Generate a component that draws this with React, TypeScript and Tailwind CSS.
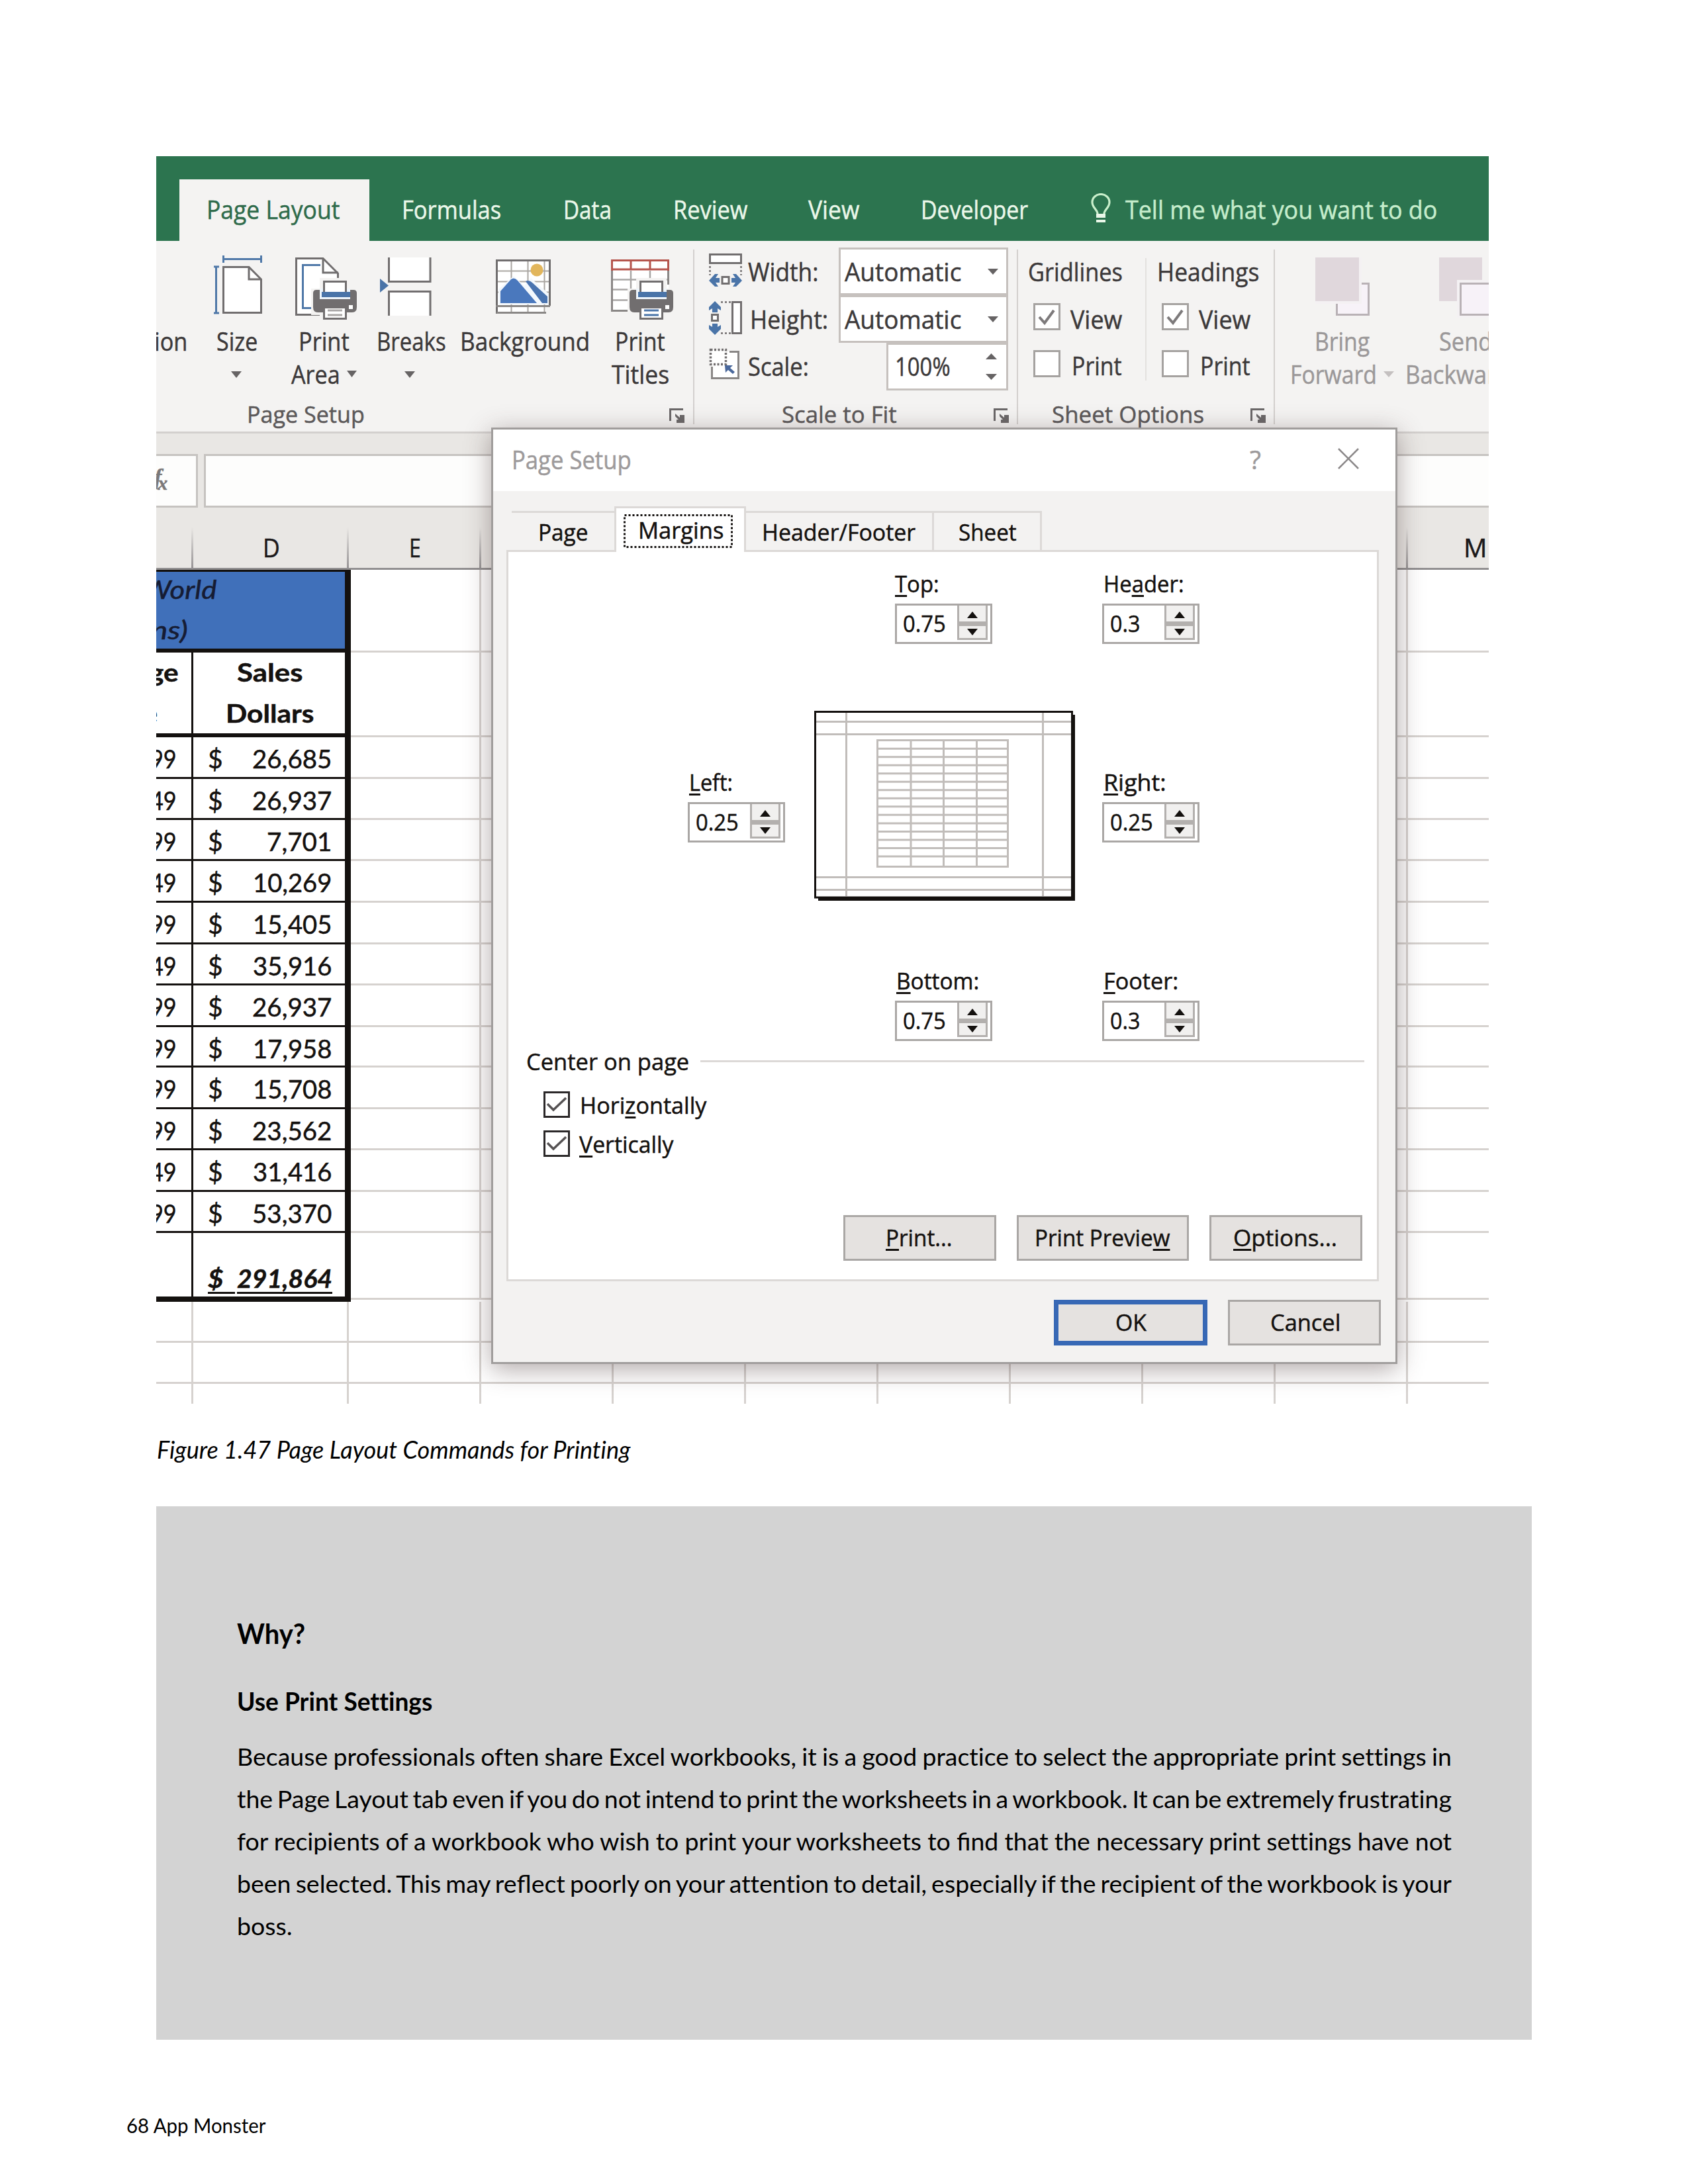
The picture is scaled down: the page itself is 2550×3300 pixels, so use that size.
import { useLayoutEffect, useRef, useState } from "react";
import type { ReactNode } from "react";

/* A run of text stretched so that its ink is exactly w pixels wide. "&" marks a mnemonic letter. */
function T({ t, w, c = "" }: { t: string; w: number; c?: string }) {
  const ref = useRef<HTMLSpanElement>(null);
  const [tr, setTr] = useState("none");
  const i = t.indexOf("&");
  const plain = t.replace("&", "");
  useLayoutEffect(() => {
    const el = ref.current;
    const ctx = document.createElement("canvas").getContext("2d");
    if (!el || !ctx) return;
    ctx.font = getComputedStyle(el).font;
    const m = ctx.measureText(plain);
    const lb = -m.actualBoundingBoxLeft;
    const rb = m.width - m.actualBoundingBoxRight;
    const s = w / (el.offsetWidth - lb - rb);
    setTr(`translateX(${-lb * s}px) scaleX(${s})`);
  }, [plain, w]);
  return (
    <span className={`block shrink-0 ${c}`} style={{ width: w }}>
      <span ref={ref} className="inline-block origin-left whitespace-pre align-top" style={{ transform: tr }}>
        {i < 0 ? (
          plain
        ) : (
          <>
            {plain.slice(0, i)}
            <span className="underline decoration-[3px] underline-offset-[4px] [text-decoration-skip-ink:none]">{plain[i]}</span>
            {plain.slice(i + 1)}
          </>
        )}
      </span>
    </span>
  );
}

/* One justified line: the spaces take up the difference to the measure; fi and fl are joined. */
function Line({ t, w }: { t: string; w: number }) {
  const ref = useRef<HTMLSpanElement>(null);
  const [ws, setWs] = useState(0);
  useLayoutEffect(() => {
    if (ref.current) setWs((w - ref.current.getBoundingClientRect().width) / (t.split(" ").length - 1));
  }, [t, w]);
  return (
    <div className="whitespace-nowrap">
      <span ref={ref} style={{ wordSpacing: ws }}>
        {t.split(/(fi|fl)/).map((part, k) =>
          k % 2 ? (
            <span key={k} className="[font-variant-ligatures:normal]">{part}</span>
          ) : (
            part
          ),
        )}
      </span>
    </div>
  );
}

function Tri({ up = false, w = 16, h = 10, fill = "#666364" }: { up?: boolean; w?: number; h?: number; fill?: string }) {
  return (
    <svg className="shrink-0" width={w} height={h} viewBox="0 0 16 10" preserveAspectRatio="none">
      <path d={up ? "M0 10H16L8 0Z" : "M0 0H16L8 10Z"} fill={fill} />
    </svg>
  );
}

function Art({ x, y = 364, w, h = 126, children }: { x: number; y?: number; w: number; h?: number; children: ReactNode }) {
  return (
    <svg className="block shrink-0" width={w} height={h} viewBox={`${x} ${y} ${w} ${h}`} fill="none">
      {children}
    </svg>
  );
}

function Launcher({ c }: { c: string }) {
  return (
    <svg className={`mt-[11px] shrink-0 ${c}`} width="23" height="22" viewBox="0 0 23 22">
      <path d="M1.5 19V1.5H21" stroke="#6b6869" strokeWidth="3" fill="none" />
      <path d="M9 8L16 14V10H23V22H11V17H14L9 12Z" fill="#6b6869" />
    </svg>
  );
}

function Printer({ dx = 0, ink = "#a9a6a5" }: { dx?: number; ink?: string }) {
  return (
    <g transform={`translate(${dx} 0)`}>
      <path d="M483 420H529V436H544V476H529V487H483V476H470V436H483Z" fill="#f4f3f2" />
      <path d="M473 443Q473 438 478 438H534Q539 438 539 443V464Q539 472 532 472H480Q473 472 473 464Z" fill="#716e6f" />
      <path d="M483 436H529V452H483Z" fill="#eef5fb" />
      <path d="M486 441H529V449H486Z" fill="#4a74a8" />
      <rect x="489.5" y="425.5" width="33" height="18" fill="#fff" stroke="#716e6f" strokeWidth="3" />
      <path d="M488 441H524V449H488Z" fill="#4a74a8" />
      <rect x="527" y="461" width="6" height="6" fill="#fff" />
      <rect x="489.5" y="464.5" width="33" height="17" fill="#fff" stroke="#716e6f" strokeWidth="3" />
      <path d="M495 469H517M495 476H517" stroke={ink} strokeWidth="3" />
    </g>
  );
}

function Check({ on = false }: { on?: boolean }) {
  return (
    <span className="-mt-[7px] block h-[41px] w-[41px] shrink-0 border-[3px] border-[#a5a2a0] bg-white">
      {on && (
        <svg width="35" height="35" viewBox="0 0 35 35" fill="none">
          <path d="M6 18L14 27L28 8" stroke="#7d7a7b" strokeWidth="4" />
        </svg>
      )}
    </span>
  );
}

function DialogCheck() {
  return (
    <span className="block h-[40px] w-[40px] shrink-0 border-[3px] border-[#2b2829] bg-white">
      <svg width="34" height="34" viewBox="0 0 34 34" fill="none">
        <path d="M3 16L12 25L31 7" stroke="#555253" strokeWidth="3.5" />
      </svg>
    </span>
  );
}

const TABS: [string, number, string][] = [
  ["Formulas", 150, "ml-[49px]"],
  ["Data", 73, "ml-[94px]"],
  ["Review", 113, "ml-[93px]"],
  ["View", 78, "ml-[91px]"],
  ["Developer", 163, "ml-[92px]"],
];

function TabBar() {
  return (
    <div className="flex h-[128px] bg-[#2c744f] leading-[50px] text-[#eaf7e9]">
      <div className="mt-[35px] ml-[35px] h-[93px] w-[287px] shrink-0 bg-[#f4f3f2] pt-[20px] pl-[41px] text-[#2f6b4b]">
        <T t="Page Layout" w={202} />
      </div>
      {TABS.map(([t, w, c]) => (
        <T key={t} t={t} w={w} c={`mt-[55px] ${c}`} />
      ))}
      <svg className="mt-[56px] ml-[94px] shrink-0" width="30" height="45" viewBox="0 0 30 45" fill="none">
        <path d="M10 31C10 25 2 22 2 13.500A13 12 0 0 1 28 13.500C28 22 20 25 20 31" stroke="#c9efcb" strokeWidth="3.200" />
        <path d="M8 31H22V37H8ZM8 40H22V44H8Z" fill="#eaf7e9" />
      </svg>
      <T t="Tell me what you want to do" w={472} c="mt-[55px] ml-[22px] text-[#c5eccb]" />
    </div>
  );
}

function Divider() {
  return <div className="mt-[13px] h-[264px] w-[2px] shrink-0 bg-[#d3d0ce]" />;
}

function BigButtons() {
  return (
    <div className="flex h-[242px] leading-[50px]">
      <div className="flex w-[47px] shrink-0 justify-end pt-[126px]">
        <T t="ion" w={50} />
      </div>
      <div className="flex w-[151px] shrink-0 flex-col items-center">
        <Art x={321} w={76}>
          <path d="M337.500 386V397M394.500 386V397M337 391.500H395M323 403H331M323 473H331M326.500 403V473" stroke="#4f78a8" strokeWidth="3" />
          <path d="M337.500 403.500H376L394.500 422V472.500H337.500Z" fill="#fff" stroke="#716e6f" strokeWidth="3" />
          <path d="M376 403V422H395" stroke="#716e6f" strokeWidth="3" />
        </Art>
        <T t="Size" w={63} />
        <div className="-ml-[3px] pt-[21px] leading-none"><Tri /></div>
      </div>
      <div className="flex w-[110px] shrink-0 flex-col items-center">
        <Art x={437} w={104}>
          <path d="M447.500 390.500H488L510.500 413V475.500H447.500Z" fill="#fff" stroke="#716e6f" strokeWidth="3" />
          <path d="M488 390V412H511" stroke="#716e6f" strokeWidth="3" />
          <path d="M484 400.500H457.500V465.500H475" stroke="#4f78a8" strokeWidth="3" />
          <Printer />
        </Art>
        <T t="Print" w={77} />
        <div className="flex items-center gap-[10px]">
          <T t="Area" w={74} />
          <Tri w={15} />
        </div>
      </div>
      <div className="flex w-[155px] shrink-0 flex-col items-center">
        <Art x={574} w={95}>
          <path d="M574 421L587 431.500L574 442Z" fill="#4a74a8" />
          <path d="M586 389H651V427H586ZM586 439H651V477H586Z" fill="#fff" />
          <path d="M587.500 389V425.500H650V389M587.500 477V440.500H650V477" stroke="#716e6f" strokeWidth="3" />
        </Art>
        <T t="Breaks" w={105} />
        <div className="-ml-[5px] pt-[21px] leading-none"><Tri /></div>
      </div>
      <div className="flex w-[188px] shrink-0 flex-col items-center">
        <Art x={749} w={88}>
          <path d="M750.500 393.500H830.500V462H825V472.500H750.500Z" fill="#fff" />
          <path d="M772.500 393V472M797.500 393V472M822.500 393V472M750 409.500H831M750 425.500H831M750 441.500H831" stroke="#aaa6a2" strokeWidth="2" />
          <path d="M750.500 474V393.500H830.500V462" stroke="#716e6f" strokeWidth="3" />
          <path d="M753 460V437L776 417L792 432L802 420L829 444V460Z" fill="#f3f8fd" />
          <path d="M756 458V440L772 422Q777 418 782 424L811 458Z" fill="#4a78bd" />
          <path d="M794 425Q799 422 804 427L827 448V458H819Z" fill="#4a74b0" />
          <circle cx="811" cy="408" r="9.500" fill="#e2b65c" />
          <path d="M749 462.500H831M750 472.500H825" stroke="#8a8786" strokeWidth="3" />
        </Art>
        <T t="Background" w={196} />
      </div>
      <div className="flex w-[160px] shrink-0 flex-col items-center">
        <Art x={917} w={101}>
          <path d="M924 393H1010V470H924Z" fill="#fff" />
          <path d="M953 409V470M982 409V470M924 422.500H1010M924 437.500H1010M924 453.500H1010" stroke="#a9a6a5" strokeWidth="2.500" />
          <path d="M924.500 408V469.500H950M1009.500 408V430" stroke="#8a8786" strokeWidth="3" />
          <path d="M924.500 409V393.500H1009.500V409M924 407H1010M953 393V408M982 393V408" stroke="#b5544c" strokeWidth="3" />
          <Printer dx={478} ink="#4a74a8" />
        </Art>
        <T t="Print" w={76} />
        <T t="Titles" w={87} />
      </div>
    </div>
  );
}

function ScaleGroup() {
  const combo = "flex h-[72px] w-[256px] shrink-0 items-center justify-between border-[3px] border-[#c6c1be] bg-white pl-[6px] pr-[12px]";
  return (
    <div className="flex h-[242px] justify-between pt-[10px] pr-[13px] pl-[22px] leading-[72px]">
      <div>
        <div className="flex h-[72px]">
          <Art x={1071} y={374} w={50} h={72}>
            <rect x="1072.500" y="384.500" width="47" height="13" fill="#fff" stroke="#716e6f" strokeWidth="3" />
            <path d="M1072.500 402V416M1119.500 402V416" stroke="#716e6f" strokeWidth="2.500" strokeDasharray="3 3" />
            <path d="M1071 424L1080 414H1085L1081 420H1087V427H1081L1085 433H1080ZM1121 424L1112 414H1107L1111 420H1105V427H1111L1107 433H1112Z" fill="#4a74a8" />
            <rect x="1091" y="418.500" width="10" height="10" fill="#fff" stroke="#716e6f" strokeWidth="3" />
          </Art>
          <T t="Width:" w={106} c="ml-[9px]" />
        </div>
        <div className="flex h-[72px]">
          <Art x={1071} y={446} w={50} h={72}>
            <rect x="1106.500" y="456.500" width="13" height="47" fill="#fff" stroke="#716e6f" strokeWidth="3" />
            <path d="M1089 456.500H1104M1089 503.500H1104" stroke="#716e6f" strokeWidth="2.500" strokeDasharray="3 3" />
            <path d="M1080 455L1089 464V469L1084 466V472H1076V466L1071 469V464ZM1080 506L1089 497V491L1084 494V489H1076V494L1071 491V497Z" fill="#4a74a8" />
            <rect x="1075.500" y="475.500" width="9" height="9" fill="#fff" stroke="#716e6f" strokeWidth="3" />
          </Art>
          <T t="Height:" w={117} c="ml-[12px]" />
        </div>
        <div className="flex h-[72px]">
          <Art x={1071} y={518} w={50} h={72}>
            <path d="M1075 553V572H1116V531H1100" fill="#fff" />
            <path d="M1075.500 554V571.500H1115.500V531.500H1102" stroke="#8a8786" strokeWidth="3" />
            <rect x="1073.500" y="528.500" width="23" height="22" fill="#fff" stroke="#716e6f" strokeWidth="3.500" strokeDasharray="3 2.500" />
            <path d="M1095 552H1107L1103 556L1110 562L1107 565L1100 559L1096 563Z" fill="#4a689c" />
          </Art>
          <T t="Scale:" w={91} c="-mt-[1px] ml-[9px]" />
        </div>
      </div>
      <div className="flex flex-col items-end">
        <div className={combo}>
          <T t="Automatic" w={176} />
          <Tri w={16} h={9} />
        </div>
        <div className={combo}>
          <T t="Automatic" w={176} />
          <Tri w={16} h={9} />
        </div>
        <div className="flex h-[72px] w-[184px] shrink-0 items-center justify-between border-[3px] border-[#c6c1be] bg-white pr-[14px] pl-[10px]">
          <T t="100%" w={84} c="-mt-[2px]" />
          <div className="flex flex-col gap-[22px]">
            <Tri up w={17} h={9} />
            <Tri w={17} h={9} />
          </div>
        </div>
      </div>
    </div>
  );
}

function OptionColumn({ title, w, pad }: { title: string; w: number; pad: string }) {
  return (
    <div className="w-[192px] shrink-0 pt-[10px] leading-[72px]">
      <T t={title} w={w} c={pad} />
      <div className="flex items-center pl-[23px]">
        <Check on />
        <T t="View" w={79} c="ml-[15px]" />
      </div>
      <div className="flex items-center pl-[23px]">
        <Check />
        <T t="Print" w={76} c="-mt-[2px] ml-[17px]" />
      </div>
    </div>
  );
}

function ArrangeGroup() {
  return (
    <div className="flex h-[242px] leading-[50px] text-[#9b9899]">
      <div className="flex w-[203px] shrink-0 flex-col items-center">
        <Art x={1986} w={82}>
          <rect x="2018.500" y="428.500" width="48" height="47" fill="#f7f2f8" stroke="#b9b2b6" strokeWidth="3" />
          <path d="M1986 389H2056V459H1986Z" fill="#f4f1f3" />
          <path d="M1986 389H2052V455H1986Z" fill="#e0d7dc" />
        </Art>
        <T t="Bring" w={83} />
        <div className="flex items-center gap-[11px]">
          <T t="Forward" w={130} />
          <Tri w={16} h={9} fill="#c4c0c0" />
        </div>
      </div>
      <div className="-ml-[6px] w-[160px] shrink-0">
        <div className="pl-[51px]">
          <Art x={2174} w={82}>
            <path d="M2174 389H2239V455H2174Z" fill="#e0d7dc" />
            <path d="M2201 423H2260V480H2201Z" fill="#f4f1f3" />
            <rect x="2206.500" y="428.500" width="60" height="47" fill="#f7f2f8" stroke="#b9b2b6" strokeWidth="3" />
          </Art>
          <T t="Send" w={80} />
        </div>
        <T t="Backward" w={158} />
      </div>
    </div>
  );
}

function Ribbon() {
  const foot = "flex text-[34px] leading-[40px] text-[#5c595a]";
  return (
    <div className="flex h-[288px] bg-[#f4f3f2] text-[#3c393a]">
      <div className="w-[811px] shrink-0">
        <BigButtons />
        <div className={foot}>
          <T t="Page Setup" w={178} c="ml-[137px]" />
          <Launcher c="ml-[460px]" />
        </div>
      </div>
      <Divider />
      <div className="w-[487px] shrink-0">
        <ScaleGroup />
        <div className={foot}>
          <T t="Scale to Fit" w={174} c="ml-[132px]" />
          <Launcher c="ml-[146px]" />
        </div>
      </div>
      <Divider />
      <div className="w-[386px] shrink-0">
        <div className="flex h-[242px]">
          <OptionColumn title="Gridlines" w={143} pad="ml-[15px]" />
          <div className="mt-[26px] h-[185px] w-[2px] shrink-0 bg-[#e3e1df]" />
          <OptionColumn title="Headings" w={154} pad="ml-[16px]" />
        </div>
        <div className={foot}>
          <T t="Sheet Options" w={230} c="ml-[51px]" />
          <Launcher c="ml-[70px]" />
        </div>
      </div>
      <Divider />
      <ArrangeGroup />
    </div>
  );
}

function FormulaBar() {
  return (
    <div className="flex h-[115px] border-t-[3px] border-[#d3d0ce] bg-[#e9e7e4] pt-[31px] pb-0">
      <div className="flex h-[81px] w-[63px] shrink-0 border-y-[3px] border-r-[3px] border-[#c6c3c0] bg-[#fdfdfc] font-['Liberation_Serif'] font-bold text-[#7b7879] italic">
        <span className="mt-[15px] -ml-[3px] text-[34px] leading-[34px]">f</span>
        <span className="mt-[26px] -ml-[6px] text-[30px] leading-[30px]">x</span>
      </div>
      <div className="ml-[9px] h-[81px] flex-1 border-y-[3px] border-l-[3px] border-[#c6c3c0] bg-[#fdfdfc]" />
    </div>
  );
}

function HeaderCell({ c, children }: { c: string; children?: ReactNode }) {
  return (
    <div className={`flex h-full shrink-0 justify-center ${c}`}>
      <div className="flex flex-1 justify-center pt-[35px]">{children}</div>
      <div className="mt-[30px] w-[3px] shrink-0 bg-linear-to-b from-[#e9e7e4] to-[#979495]" />
    </div>
  );
}

function ColumnHeads() {
  return (
    <div className="flex h-[94px] border-b-[3px] border-[#929091] bg-[#e9e7e4] leading-[50px] text-[#1c191a]">
      <HeaderCell c="w-[56px]" />
      <HeaderCell c="w-[235px]"><T t="D" w={26} c="ml-[4px]" /></HeaderCell>
      <HeaderCell c="w-[200px]"><T t="E" w={18} c="ml-[2px]" /></HeaderCell>
      {[0, 1, 2, 3, 4, 5, 6].map((k) => (
        <HeaderCell key={k} c="w-[200px]" />
      ))}
      <T t="M" w={35} c="mt-[35px] ml-[84px]" />
    </div>
  );
}

/* Empty cells to the right of the table: E, the columns behind the dialog, and M. */
function Blank() {
  return (
    <>
      {[0, 1, 2, 3, 4, 5, 6, 7].map((k) => (
        <div
          key={k}
          className={`h-full shrink-0 border-r-[3px] border-b-[3px] border-[#d6d2cf] ${k === 0 ? "flex-1" : "w-[200px]"}`}
        />
      ))}
      <div className="h-full w-[122px] shrink-0 border-b-[3px] border-[#d6d2cf]" />
    </>
  );
}

const ROWS: [string, string, number, string][] = [
  ["99", "26,685", 121, "h-[63px]"],
  ["49", "26,937", 121, "h-[62px]"],
  ["99", "7,701", 99, "h-[62px]"],
  ["49", "10,269", 120, "h-[63px]"],
  ["99", "15,405", 120, "h-[63px]"],
  ["49", "35,916", 120, "h-[62px]"],
  ["99", "26,937", 121, "h-[63px]"],
  ["99", "17,958", 120, "h-[61px]"],
  ["99", "15,708", 120, "h-[63px]"],
  ["99", "23,562", 121, "h-[62px]"],
  ["49", "31,416", 120, "h-[63px]"],
  ["99", "53,370", 121, "h-[62px]"],
];

function Sheet() {
  const ink = "border-[#14110f]";
  return (
    <div className="h-[1260px] overflow-hidden bg-white font-['Lato'] text-[#14110f]">
      <div className="flex h-[125px]">
        <div className={`w-[294px] shrink-0 border-t-[3px] border-r-[9px] border-b-[6px] bg-[#4070ba] leading-[61px] text-[#161c33] italic ${ink}`}>
          <div className="-mt-[4px] flex w-[91px] justify-end"><T t="World" w={110} /></div>
          <div className="flex w-[47px] justify-end"><T t="ns)" w={55} /></div>
        </div>
        <Blank />
      </div>
      <div className="flex h-[128px]">
        <div className={`flex w-[56px] shrink-0 flex-col items-end border-r-[3px] border-b-[6px] leading-[62px] font-bold ${ink}`}>
          <T t="ge" w={45} c="mr-[19px] -mt-[2px]" />
          <T t="e" w={20} c="mr-[51px]" />
        </div>
        <div className={`flex w-[238px] shrink-0 flex-col items-center border-r-[9px] border-b-[6px] leading-[62px] font-bold ${ink}`}>
          <T t="Sales" w={99} c="-mt-[2px] ml-[2px]" />
          <T t="Dollars" w={133} c="ml-[2px]" />
        </div>
        <Blank />
      </div>
      {ROWS.map(([p, v, w, h], k) => (
        <div key={k} className={`flex leading-[64px] ${h}`}>
          <div className={`flex w-[56px] shrink-0 justify-end border-r-[3px] border-b-[3px] pr-[22px] ${ink}`}>
            <T t={p} w={40} />
          </div>
          <div className={`flex w-[238px] shrink-0 justify-between border-r-[9px] border-b-[3px] pr-[19px] pl-[22px] ${ink}`}>
            <T t="$" w={23} />
            <T t={v} w={w} />
          </div>
          <Blank />
        </div>
      ))}
      <div className="flex h-[104px]">
        <div className={`w-[56px] shrink-0 border-r-[3px] border-b-[8px] ${ink}`} />
        <div className={`w-[238px] shrink-0 border-r-[9px] border-b-[8px] pt-[43px] pl-[22px] leading-[50px] font-bold italic ${ink}`}>
          <div className="flex h-[49px] gap-[3px]">
            <div className={`w-[41px] border-b-[3px] ${ink}`}><T t="$" w={24} /></div>
            <div className={`w-[144px] border-b-[3px] ${ink}`}><T t="291,864" w={144} /></div>
          </div>
        </div>
        <div className="flex h-[101px] flex-1"><Blank /></div>
      </div>
      {["h-[62px]", "h-[62px]", "h-[40px]"].map((h, k) => (
        <div key={k} className={`flex ${h}`}>
          <div className="w-[56px] shrink-0 border-r-[3px] border-b-[3px] border-[#d6d2cf]" />
          <div className="w-[235px] shrink-0 border-r-[3px] border-b-[3px] border-[#d6d2cf]" />
          <Blank />
        </div>
      ))}
    </div>
  );
}

function Field({ label, lw, value, vw, c = "ml-[2px]" }: { label: string; lw: number; value: string; vw: number; c?: string }) {
  return (
    <div className="leading-[40px]">
      <T t={label} w={lw} c={`h-[50px] ${c}`} />
      <div className="flex h-[61px] w-[147px] justify-between border-[3px] border-[#aaa7a5] bg-white pr-[4px] pl-[9px]">
        <T t={value} w={vw} c="pt-[7px]" />
        <div className="flex h-[52px] w-[46px] flex-col border-x-[3px] border-b-[3px] border-[#b3b0ae] bg-[#f1f0ef]">
          <div className="flex h-[24px] items-center justify-center pt-[4px]"><Tri up fill="#14110f" /></div>
          <div className="h-[7px] bg-[#b3b0ae]" />
          <div className="flex h-[18px] items-center justify-center"><Tri fill="#14110f" /></div>
        </div>
      </div>
    </div>
  );
}

function PagePreview() {
  const rows = Array.from({ length: 15 }, (_, k) => 1118.6 + k * 12.53);
  return (
    <svg className="-mt-[88px] -ml-[122px] block max-w-none" width="395" height="288" viewBox="1230 1074 395 288" fill="none">
      <path d="M1236 1080H1624V1361H1236Z" fill="#14110f" />
      <rect x="1231.500" y="1075.500" width="388" height="280.500" fill="#fff" stroke="#14110f" strokeWidth="3" />
      <path
        d="M1278.500 1077V1354M1575.500 1077V1354M1233 1090.500H1618M1233 1109.500H1618M1233 1325.500H1618M1233 1344.500H1618M1325.500 1117V1311M1376 1117V1311M1425.500 1117V1311M1475.500 1117V1311M1522.500 1117V1311M1324 1309.500H1524"
        stroke="#c1bdba"
        strokeWidth="3"
      />
      {rows.map((y) => (
        <path key={y} d={`M1324 ${y}H1524`} stroke="#c1bdba" strokeWidth="3" />
      ))}
    </svg>
  );
}

function Btn({ t, w, c }: { t: string; w: number; c: string }) {
  return (
    <div className={`flex h-[69px] shrink-0 items-center justify-center bg-[#e5e2e0] leading-[40px] ${c}`}>
      <T t={t} w={w} c="-mt-[1px]" />
    </div>
  );
}

function Dialog() {
  const line = "border-[#dcd9d7]";
  return (
    <div className="absolute top-[410px] left-[506px] h-[1415px] w-[1369px] border-[3px] border-[#a09d9c] bg-[#f3f2f1] text-[34px] text-[#14110f] shadow-[0_8px_36px_rgba(70,50,50,0.42)]">
      <div className="flex h-[93px] bg-white pt-[20px] pl-[28px] text-[38px] leading-[50px] text-[#9d9a9b]">
        <T t="Page Setup" w={181} />
        <T t="?" w={17} c="ml-[934px]" />
        <svg className="mt-[8px] ml-[116px]" width="32" height="32" viewBox="0 0 32 32" fill="none">
          <path d="M1 1L31 31M31 1L1 31" stroke="#8b8889" strokeWidth="2.500" />
        </svg>
      </div>
      <div className="flex h-[89px] items-end pl-[28px] leading-[40px]">
        <div className={`h-[59px] w-[155px] border-t-[3px] pt-[9px] pl-[40px] ${line}`}><T t="Page" w={76} /></div>
        <div className={`relative z-10 -mb-[3px] h-[69px] w-[199px] border-x-[3px] border-t-[3px] bg-white pt-[13px] pl-[33px] ${line}`}>
          <svg className="absolute top-[9px] left-[11px]" width="166" height="51" viewBox="0 0 166 51" fill="none">
            <rect x="1.500" y="1.500" width="162" height="48" stroke="#14110f" strokeWidth="3" strokeDasharray="3 3" />
          </svg>
          <T t="Margins" w={129} />
        </div>
        <div className={`h-[59px] w-[284px] border-t-[3px] border-r-[3px] pt-[9px] pl-[24px] ${line}`}><T t="Header/Footer" w={233} /></div>
        <div className={`h-[59px] w-[163px] border-t-[3px] border-r-[3px] pt-[9px] pl-[37px] ${line}`}><T t="Sheet" w={88} /></div>
      </div>
      <div className={`ml-[20px] h-[1105px] w-[1318px] border-[3px] bg-white ${line}`}>
        <div className="mt-[28px] ml-[271px] grid grid-cols-[313px_313px_147px] grid-rows-[300px_300px_111px]">
          <div />
          <Field label="&Top:" lw={66} value="0.75" vw={65} c="" />
          <Field label="He&ader:" lw={121} value="0.3" vw={46} />
          <Field label="&Left:" lw={65} value="0.25" vw={65} />
          <div><PagePreview /></div>
          <Field label="&Right:" lw={94} value="0.25" vw={65} />
          <div />
          <Field label="&Bottom:" lw={125} value="0.75" vw={65} />
          <Field label="&Footer:" lw={113} value="0.3" vw={46} />
        </div>
        <div className="mt-[11px] ml-[27px] flex leading-[40px]">
          <T t="Center on page" w={247} />
          <div className="mt-[18px] ml-[16px] h-[3px] w-[1003px] bg-[#dcd9d7]" />
        </div>
        <div className="mt-[25px] ml-[53px] flex flex-col gap-[19px] leading-[40px]">
          <div className="flex gap-[15px]"><DialogCheck /><T t="Hori&zontally" w={191} c="pt-[1px] h-[40px]" /></div>
          <div className="flex gap-[14px]"><DialogCheck /><T t="&Vertically" w={142} c="pt-[1px] h-[40px]" /></div>
        </div>
        <div className="mt-[88px] ml-[506px] flex gap-[31px]">
          <Btn t="&Print..." w={100} c="w-[231px] border-[3px] border-[#aaa7a5] pr-[4px]" />
          <Btn t="Print Previe&w" w={205} c="w-[260px] border-[3px] border-[#aaa7a5] pr-[2px]" />
          <Btn t="&Options..." w={156} c="w-[231px] border-[3px] border-[#aaa7a5] pr-[4px]" />
        </div>
      </div>
      <div className="mt-[28px] ml-[847px] flex gap-[31px]">
        <Btn t="OK" w={47} c="w-[232px] border-[7px] border-[#3768b5]" />
        <Btn t="Cancel" w={106} c="w-[231px] border-[3px] border-[#aaa7a5] pl-[3px]" />
      </div>
    </div>
  );
}

const LINES = [
  "Because professionals often share Excel workbooks, it is a good practice to select the appropriate print settings in",
  "the Page Layout tab even if you do not intend to print the worksheets in a workbook. It can be extremely frustrating",
  "for recipients of a workbook who wish to print your worksheets to find that the necessary print settings have not",
  "been selected. This may reflect poorly on your attention to detail, especially if the recipient of the workbook is your",
];

export default function App() {
  return (
    <div className="h-[3300px] w-[2550px] overflow-hidden bg-white font-['Lato',sans-serif] text-[37.5px] text-black [font-variant-ligatures:none]">
      <div className="relative mt-[236px] ml-[236px] h-[1885px] w-[2013px] overflow-hidden font-['Open_Sans',sans-serif] text-[38px] [-webkit-text-stroke:0.5px]">
        <TabBar />
        <Ribbon />
        <FormulaBar />
        <ColumnHeads />
        <Sheet />
        <Dialog />
      </div>
      <div className="mt-[44px] ml-[237px] leading-[50px] italic">
        <T t="Figure 1.47 Page Layout Commands for Printing" w={715} />
      </div>
      <div className="mt-[61px] ml-[236px] h-[806px] w-[2078px] bg-[#d3d3d3] pt-[162px] pl-[122px]">
        <div className="text-[41.700px] leading-[60px] font-bold"><T t="Why?" w={104} /></div>
        <div className="mt-[48px] leading-[50px] font-bold"><T t="Use Print Settings" w={295} /></div>
        <div className="mt-[26px] leading-[64px]">
          {LINES.map((t) => (
            <Line key={t} t={t} w={1835} />
          ))}
          <div>boss.</div>
        </div>
      </div>
      <div className="mt-[109px] ml-[191px] text-[31.200px] leading-[40px]">
        <T t="68 App Monster" w={211} />
      </div>
    </div>
  );
}
